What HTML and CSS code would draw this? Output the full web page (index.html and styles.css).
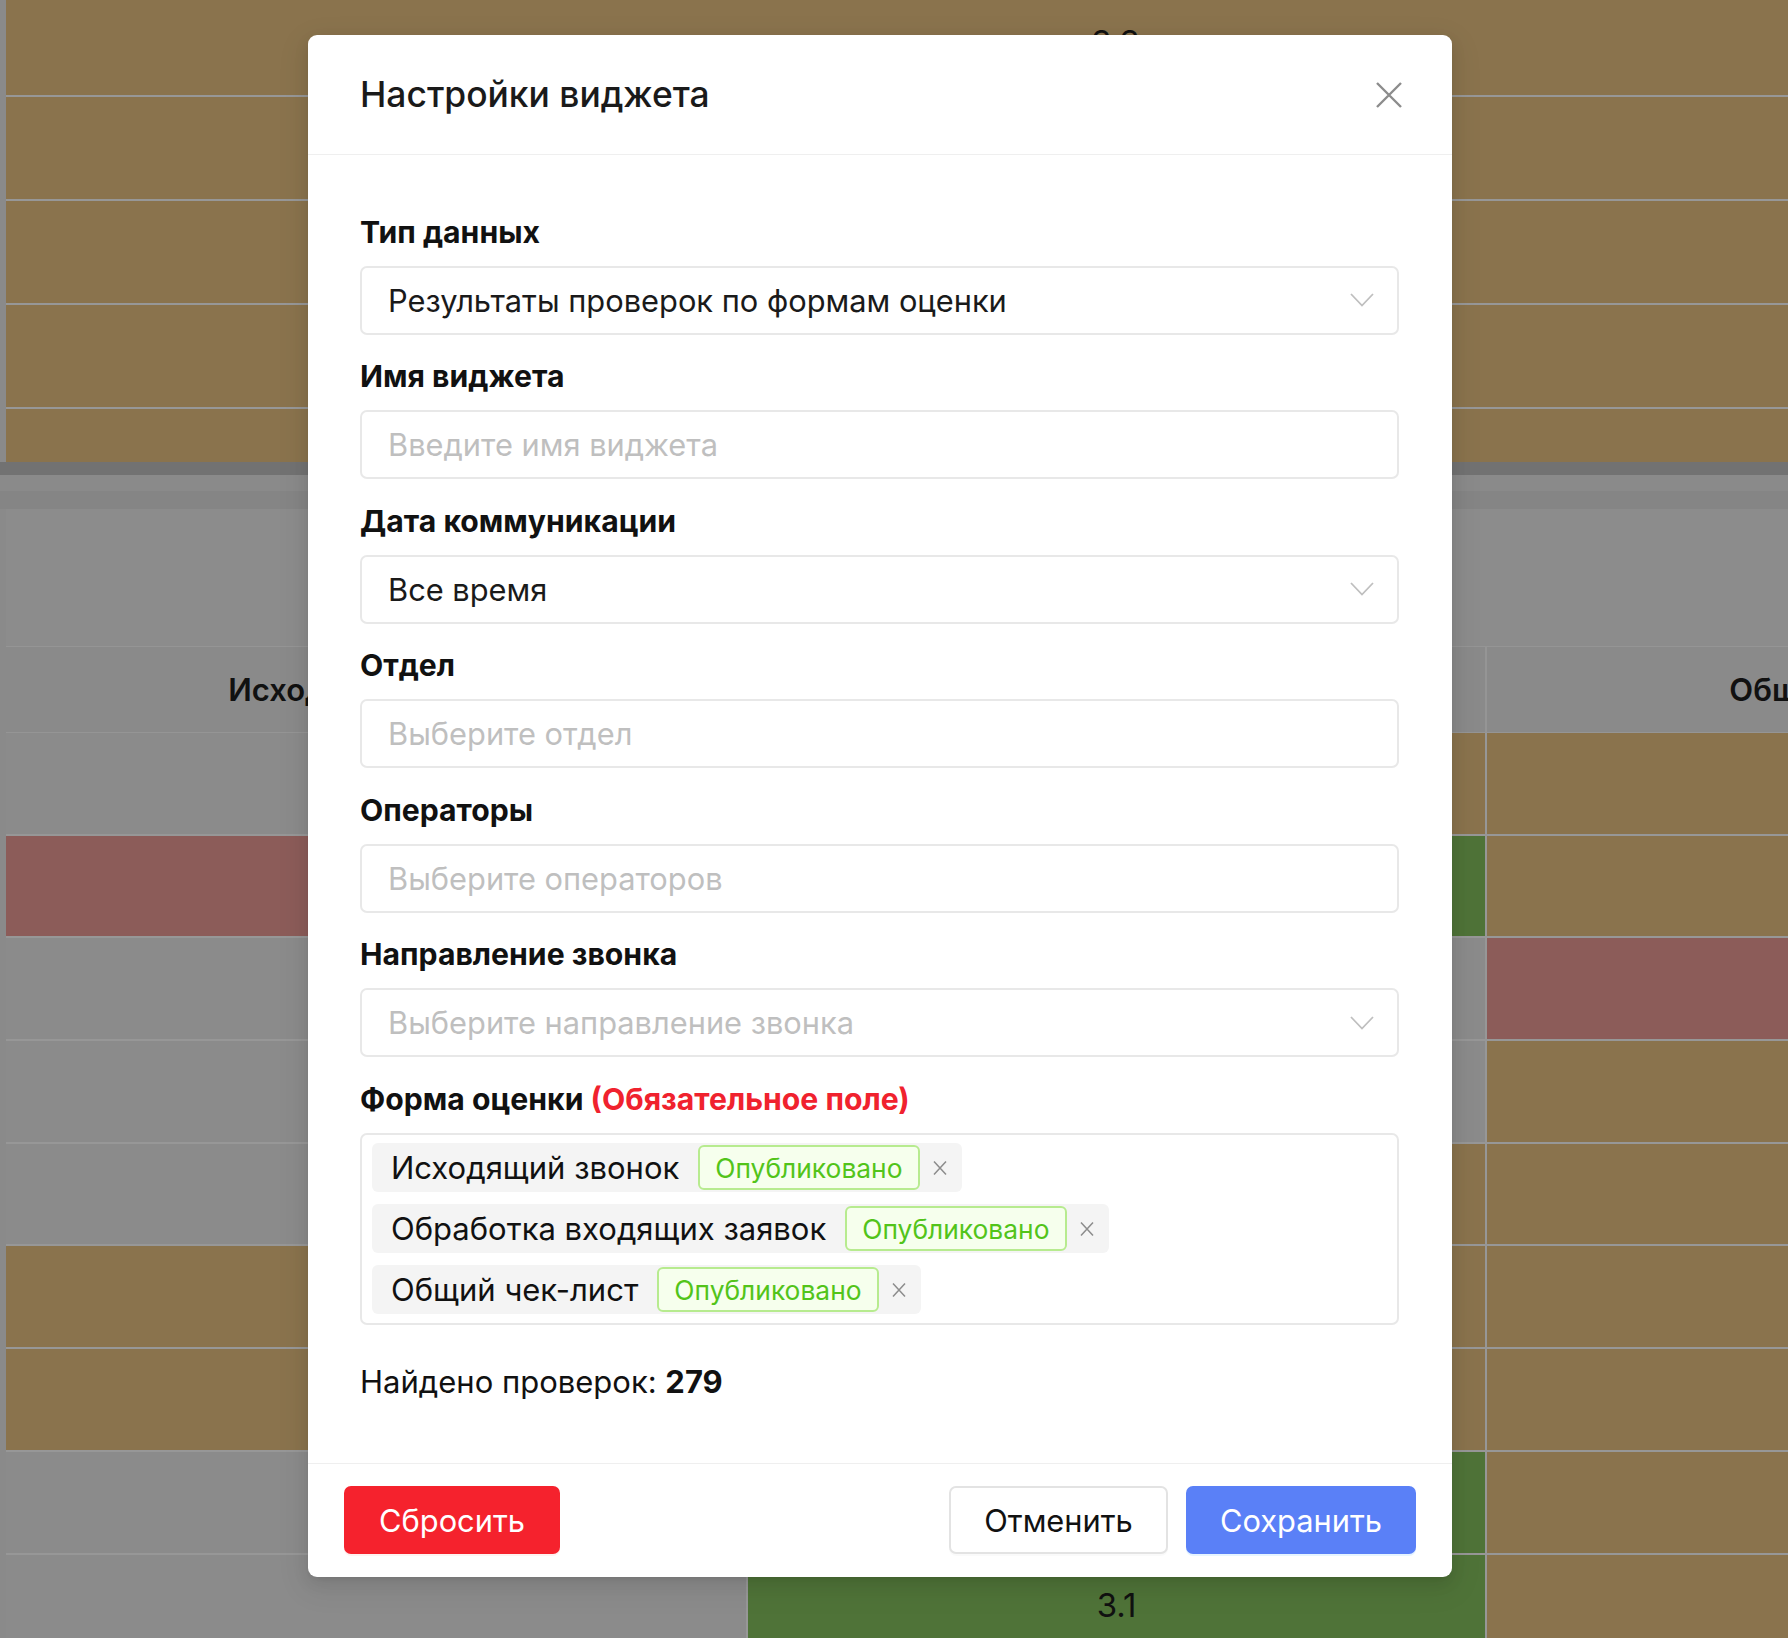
FILE: index.html
```html
<!DOCTYPE html>
<html lang="ru">
<head>
<meta charset="utf-8">
<title>Настройки виджета</title>
<link rel="stylesheet" href="styles.css">
</head>
<body>
<div class="page">
  <div class="top-table">
    <div class="trow trow-first"><div class="tcell"></div><div class="tcell tnum">3.3</div><div class="tcell"></div></div>
    <div class="trow"><div class="tcell"></div><div class="tcell tnum">3.2</div><div class="tcell"></div></div>
    <div class="trow"><div class="tcell"></div><div class="tcell tnum">3.0</div><div class="tcell"></div></div>
    <div class="trow"><div class="tcell"></div><div class="tcell tnum">3.4</div><div class="tcell"></div></div>
    <div class="trow trow-last"><div class="tcell"></div><div class="tcell"></div><div class="tcell"></div></div>
  </div>
  <div class="hscroll"></div>
  <div class="band band-a"></div>
  <div class="band band-b"></div>
  <div class="table-gap"></div>
  <div class="grid">
    <div class="gh">Исходящий звонок</div>
    <div class="gh">Обработка входящих заявок</div>
    <div class="gh">Общий чек-лист</div>

    <div class="gc gray"></div><div class="gc ochre">3.2</div><div class="gc ochre">3.3</div>
    <div class="gc red">2.1</div><div class="gc green">3.8</div><div class="gc ochre">3.0</div>
    <div class="gc gray"></div><div class="gc gray"></div><div class="gc red">2.4</div>
    <div class="gc gray"></div><div class="gc gray"></div><div class="gc ochre">3.1</div>
    <div class="gc gray"></div><div class="gc ochre">3.3</div><div class="gc ochre">3.2</div>
    <div class="gc ochre">3.0</div><div class="gc ochre">3.4</div><div class="gc ochre">3.1</div>
    <div class="gc ochre">3.2</div><div class="gc ochre">3.0</div><div class="gc ochre">3.3</div>
    <div class="gc gray"></div><div class="gc green">3.9</div><div class="gc ochre">3.2</div>
    <div class="gc gray"></div><div class="gc green">3.1</div><div class="gc ochre">3.0</div>
  </div>
</div>

<div class="modal" role="dialog" aria-label="Настройки виджета">
  <div class="modal-header">
    <h2 class="modal-title">Настройки виджета</h2>
    <button class="modal-close" aria-label="Закрыть">
      <svg width="28" height="28" viewBox="0 0 28 28"><path d="M2 2 L26 26 M26 2 L2 26" stroke="#8c8c8c" stroke-width="2.4" fill="none"/></svg>
    </button>
  </div>
  <div class="modal-body">
    <div class="field">
      <div class="label">Тип данных</div>
      <div class="box select"><span class="value">Результаты проверок по формам оценки</span>
        <svg class="chev" width="24" height="14" viewBox="0 0 24 14"><polyline points="1,1 12,12.5 23,1" stroke="#bfbfbf" stroke-width="1.8" fill="none"/></svg></div>
    </div>
    <div class="field">
      <div class="label">Имя виджета</div>
      <div class="box"><span class="placeholder">Введите имя виджета</span></div>
    </div>
    <div class="field">
      <div class="label">Дата коммуникации</div>
      <div class="box select"><span class="value">Все время</span>
        <svg class="chev" width="24" height="14" viewBox="0 0 24 14"><polyline points="1,1 12,12.5 23,1" stroke="#bfbfbf" stroke-width="1.8" fill="none"/></svg></div>
    </div>
    <div class="field">
      <div class="label">Отдел</div>
      <div class="box"><span class="placeholder">Выберите отдел</span></div>
    </div>
    <div class="field">
      <div class="label">Операторы</div>
      <div class="box"><span class="placeholder">Выберите операторов</span></div>
    </div>
    <div class="field">
      <div class="label">Направление звонка</div>
      <div class="box select"><span class="placeholder">Выберите направление звонка</span>
        <svg class="chev" width="24" height="14" viewBox="0 0 24 14"><polyline points="1,1 12,12.5 23,1" stroke="#bfbfbf" stroke-width="1.8" fill="none"/></svg></div>
    </div>
    <div class="field">
      <div class="label">Форма оценки <span class="req">(Обязательное поле)</span></div>
      <div class="tags">
        <div class="tag"><span class="tag-text">Исходящий звонок</span><span class="badge">Опубликовано</span>
          <svg class="tag-x" width="16" height="16" viewBox="0 0 16 16"><path d="M2 1.5 L14 14.5 M14 1.5 L2 14.5" stroke="#8c8c8c" stroke-width="1.5" fill="none"/></svg></div>
        <div class="tag"><span class="tag-text">Обработка входящих заявок</span><span class="badge">Опубликовано</span>
          <svg class="tag-x" width="16" height="16" viewBox="0 0 16 16"><path d="M2 1.5 L14 14.5 M14 1.5 L2 14.5" stroke="#8c8c8c" stroke-width="1.5" fill="none"/></svg></div>
        <div class="tag"><span class="tag-text">Общий чек-лист</span><span class="badge">Опубликовано</span>
          <svg class="tag-x" width="16" height="16" viewBox="0 0 16 16"><path d="M2 1.5 L14 14.5 M14 1.5 L2 14.5" stroke="#8c8c8c" stroke-width="1.5" fill="none"/></svg></div>
      </div>
    </div>
    <div class="found">Найдено проверок: <b>279</b></div>
  </div>
  <div class="modal-footer">
    <button class="btn btn-danger">Сбросить</button>
    <div class="footer-right">
      <button class="btn btn-default">Отменить</button>
      <button class="btn btn-primary">Сохранить</button>
    </div>
  </div>
</div>
</body>
</html>
```

FILE: styles.css
```css
* { box-sizing: border-box; }

html, body {
  margin: 0;
  padding: 0;
}

body {
  width: 1788px;
  height: 1638px;
  overflow: hidden;
  position: relative;
  font-family: Inter, "Liberation Sans", Arial, sans-serif;
  color: #111;
  background: #8b8b8b;
}

/* ---------- background page (dimmed by modal mask) ---------- */
.page {
  width: 1788px;
  height: 1638px;
  padding-left: 6px;
  background: #8a8a8a;
  overflow: hidden;
}

.top-table {
  height: 462px;
  overflow: hidden;
  background: #8a734d;
}

.trow {
  display: grid;
  grid-template-columns: 740px 739px 740px;
  height: 104px;
  border-bottom: 2px solid #979797;
}

.trow-first {
  height: 97px;
}

.trow-last {
  border-bottom: none;
}

.tcell {
  display: flex;
  align-items: center;
  justify-content: center;
  font-size: 33px;
  color: #111;
}

.trow-first .tnum {
  padding-bottom: 12px;
}

.hscroll {
  height: 13px;
  margin-left: -6px;
  background: #727272;
}

.band {
  margin-left: -6px;
}

.band-a {
  height: 16px;
  background: #8a8a8a;
}

.band-b {
  height: 18px;
  background: #858585;
}

.table-gap {
  height: 137px;
  background: #8c8c8c;
}

.grid {
  display: grid;
  grid-template-columns: 740px 739px 740px;
  grid-template-rows: 87px;
  grid-auto-rows: 102.7px;
}

.gh {
  display: flex;
  align-items: center;
  justify-content: center;
  font-size: 31px;
  font-weight: 600;
  color: #111;
  background: #8a8a8a;
  border-bottom: 1px solid #959595;
  border-top: 1px solid #959595;
  white-space: nowrap;
}

.gh + .gh {
  border-left: 2px solid #959595;
}

.gc {
  display: flex;
  align-items: center;
  justify-content: center;
  font-size: 33px;
  color: #111;
  border-bottom: 2px solid #979797;
}

.gc:nth-child(3n+2),
.gc:nth-child(3n) {
  border-left: 2px solid #979797;
}

.gray { background: #8b8b8b; }
.ochre { background: #8a734d; }
.red { background: #8c5c59; }
.green { background: #4f7338; }

/* ---------- modal ---------- */
.modal {
  position: absolute;
  left: 308px;
  top: 35px;
  width: 1144px;
  background: #fff;
  border-radius: 9px;
  box-shadow: 0 6px 16px rgba(0, 0, 0, 0.08), 0 3px 6px -4px rgba(0, 0, 0, 0.12), 0 9px 28px 8px rgba(0, 0, 0, 0.05);
}

.modal-header {
  height: 120px;
  display: flex;
  align-items: center;
  justify-content: space-between;
  padding: 0 49px 0 52px;
  border-bottom: 1px solid #efefef;
}

.modal-title {
  margin: 0;
  font-size: 35.4px;
  font-weight: 500;
  color: #1a1a1a;
}

.modal-close {
  border: none;
  background: none;
  padding: 0;
  width: 28px;
  height: 28px;
  display: flex;
}

.modal-body {
  padding: 56.5px 53px 61px 52px;
}

.field {
  margin-bottom: 21.6px;
}

.label {
  font-size: 30.2px;
  font-weight: 700;
  line-height: 40px;
  margin-bottom: 14px;
  color: #111;
}

.req {
  color: #f0222e;
}

.box {
  height: 69px;
  border: 2px solid #e8e8e8;
  border-radius: 7px;
  display: flex;
  align-items: center;
  justify-content: space-between;
  padding: 0 23px 0 26px;
  font-size: 30.8px;
}

.value {
  color: #1a1a1a;
}

.placeholder {
  color: #bfbfbf;
}

.chev {
  display: block;
}

.tags {
  border: 2px solid #e8e8e8;
  border-radius: 7px;
  padding: 8px 10px 9px;
  display: flex;
  flex-direction: column;
  align-items: flex-start;
  gap: 12px;
}

.tag {
  height: 49px;
  display: inline-flex;
  align-items: center;
  background: #f4f4f4;
  border-radius: 6px;
  padding: 0 14px 0 19px;
}

.tag-text {
  font-size: 31px;
  color: #111;
  margin-right: 19px;
}

.badge {
  height: 45px;
  display: inline-flex;
  align-items: center;
  padding: 0 15px;
  font-size: 26.4px;
  color: #52c41a;
  background: #f6ffed;
  border: 2px solid #b7eb8f;
  border-radius: 6px;
  margin-right: 12px;
}

.tag-x {
  display: block;
}

.found {
  margin-top: 37px;
  font-size: 31px;
  line-height: 40px;
  color: #111;
}

.found b {
  font-weight: 700;
}

.modal-footer {
  border-top: 1px solid #efefef;
  padding: 22px 36px 23px;
  display: flex;
  justify-content: space-between;
  align-items: center;
}

.footer-right {
  display: flex;
  gap: 18px;
}

.btn {
  height: 68px;
  border-radius: 7px;
  font-family: Inter, "Liberation Sans", Arial, sans-serif;
  font-size: 30.8px;
  padding: 0;
  border: 2px solid transparent;
  cursor: pointer;
}

.btn-danger {
  background: #f5222d;
  color: #fff;
  width: 216px;
  box-shadow: 0 2px 0 rgba(255, 38, 5, 0.06);
}

.btn-default {
  background: #fff;
  color: #111;
  border-color: #e3e3e3;
  width: 219px;
  box-shadow: 0 2px 0 rgba(0, 0, 0, 0.02);
}

.btn-primary {
  background: #5a80f7;
  color: #fff;
  width: 230px;
  box-shadow: 0 2px 0 rgba(5, 145, 255, 0.1);
}
```
